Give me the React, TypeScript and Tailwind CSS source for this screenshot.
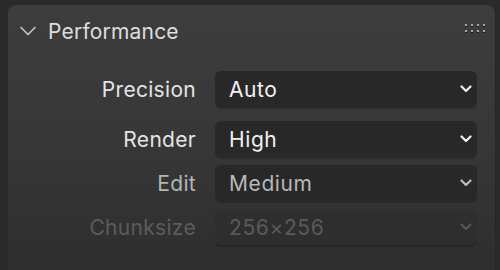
import { useState } from 'react';

type Row = {
    label: string;
    value: string;
    state: 'normal' | 'dim' | 'disabled';
};

const ROWS: Row[][] = [
    [{ label: 'Precision', value: 'Auto', state: 'normal' }],
    [
        { label: 'Render', value: 'High', state: 'normal' },
        { label: 'Edit', value: 'Medium', state: 'dim' },
        { label: 'Chunksize', value: '256×256', state: 'disabled' },
    ],
];

function Chevron({ className, width = 2 }: { className?: string; width?: number }) {
    return (
        <svg viewBox="0 0 12 8" className={className} fill="none" stroke="currentColor" strokeWidth={width} strokeLinecap="round" strokeLinejoin="round">
            <path d="M1.5 1.5 6 6l4.5-4.5" />
        </svg>
    );
}

function HeaderChevron() {
    return (
        <svg viewBox="0 0 16 10" className="w-[16px] h-[10px] text-[#c4c4c4]" fill="none" stroke="currentColor" strokeWidth={1.7} strokeLinecap="round" strokeLinejoin="round">
            <path d="M1 1.5 8 8.5l7-7" />
        </svg>
    );
}

function Grip() {
    return (
        <div className="grid grid-cols-4 gap-x-[4px] gap-y-[4px]">
            {Array.from({ length: 8 }).map((_, i) => (
                <span key={i} className="block w-[2px] h-[2px] bg-[#a8a8a8] shadow-[0_1px_0_#1a1a1a]" />
            ))}
        </div>
    );
}

function Field({ row }: { row: Row }) {
    const labelColor =
        row.state === 'normal' ? 'text-[#e4e4e4]' : row.state === 'dim' ? 'text-[#b4b4b4]' : 'text-[#5c5c5c]';
    const valueColor =
        row.state === 'normal' ? 'text-[#f2f2f2]' : row.state === 'dim' ? 'text-[#b8b8b8]' : 'text-[#5a5a5a]';
    const boxBg = row.state === 'disabled' ? 'bg-[#2e2e2e]' : 'bg-[#282828]';
    const chevColor =
        row.state === 'normal' ? 'text-[#f0f0f0]' : row.state === 'dim' ? 'text-[#bdbdbd]' : 'text-[#555555]';

    return (
        <div className="flex items-center h-[36px]">
            <div className={cn('w-[188px] text-right text-[21px] leading-none tracking-[0.3px]', labelColor)}>{row.label}</div>
            <div
                className={cn(
                    'ml-[19px] w-[262px] h-[36px] rounded-[6px] flex items-center pl-[14px] pr-[5px] shadow-[0_2px_0_rgba(0,0,0,0.18)]',
                    boxBg
                )}
            >
                <span className={cn('flex-1 text-[21px] leading-none tracking-[0.6px]', valueColor)}>{row.value}</span>
                <Chevron className={cn('w-[12px] h-[8px]', chevColor)} width={2.2} />
            </div>
        </div>
    );
}

function cn(...parts: (string | false | undefined)[]) {
    return parts.filter(Boolean).join(' ');
}

export default function App() {
    const [open] = useState(true);

    return (
        <div
            className="w-[500px] h-[270px] bg-[#2a2a2a] overflow-hidden pt-[5px] pl-[8px] pr-[5px]"
            style={{ fontFamily: 'Inter, "Noto Sans", sans-serif' }}
        >
            <div className="h-[300px] rounded-t-[8px] bg-gradient-to-b from-[#3d3d3d] via-[#363636] to-[#2c2c2c] shadow-[1px_0_0_#262626]">
                <div className="flex items-center h-[52px] pl-[12px] pr-[10px]">
                    <HeaderChevron />
                    <span className="ml-[12px] text-[21px] leading-none tracking-[0.2px] text-[#dedede]">Performance</span>
                    <div className="ml-auto mt-[-6px]">
                        <Grip />
                    </div>
                </div>
                {open && (
                    <div className="flex flex-col gap-[14px] pt-[14px]">
                        {ROWS.map((group, gi) => (
                            <div key={gi} className="flex flex-col gap-[8px]">
                                {group.map(row => (
                                    <Field key={row.label} row={row} />
                                ))}
                            </div>
                        ))}
                    </div>
                )}
            </div>
        </div>
    );
}
